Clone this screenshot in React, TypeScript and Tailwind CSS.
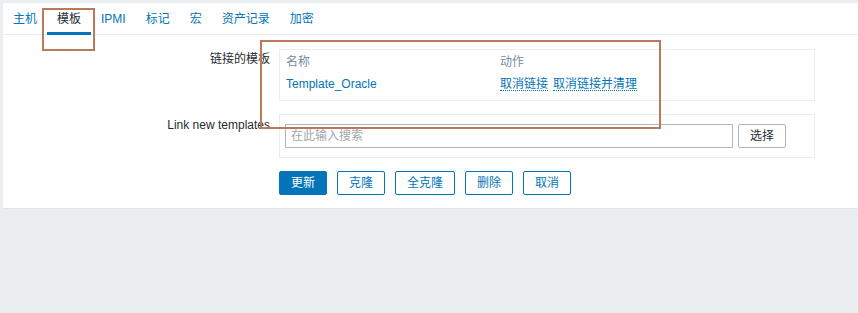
import { useState } from "react";

const tabs = ["主机", "模板", "IPMI", "标记", "宏", "资产记录", "加密"];
const actions = ["更新", "克隆", "全克隆", "删除", "取消"];

export default function App() {
  const [active, setActive] = useState(1);

  return (
    <div
      className="relative min-h-screen bg-[#ebeef0] pl-[3px] pt-[3px] text-[12px] leading-[14px] text-[#1f2c33]"
      style={{ fontFamily: '"Liberation Sans", Arial, "Noto Sans CJK SC", sans-serif' }}
    >
      <div className="border-b border-[#dfe4e7] bg-white">
        <ul className="flex h-[32px] border-b border-[#ebeef0]">
          {tabs.map((t, i) => (
            <li
              key={t}
              onClick={() => setActive(i)}
              className={
                "relative flex cursor-pointer items-center px-[10px] " +
                (i === active ? "text-[#1f2c33]" : "text-[#0275b8]")
              }
            >
              {t}
              {i === active && (
                <span className="absolute bottom-[-1px] left-0 right-0 h-[3px] bg-[#0275b8]" />
              )}
            </li>
          ))}
        </ul>

        <div className="flex flex-col gap-[13px] pb-[13px] pt-[14px]">
          <div className="flex">
            <div className="w-[267px] pt-[3px] text-right">链接的模板</div>
            <div className="ml-[9px] h-[52px] w-[536px] border border-[#ebeef0] px-[6px] pt-[5px]">
              <div className="flex h-[14px] text-[#768d99]">
                <span className="w-[214px]">名称</span>
                <span>动作</span>
              </div>
              <div className="mt-[8px] flex h-[14px]">
                <span className="w-[214px] text-[#0275b8]">Template_Oracle</span>
                <span className="flex gap-[5px] text-[#0275b8]">
                  <a className="cursor-pointer border-b border-dotted border-[#0275b8]">取消链接</a>
                  <a className="cursor-pointer border-b border-dotted border-[#0275b8]">取消链接并清理</a>
                </span>
              </div>
            </div>
          </div>

          <div className="flex">
            <div className="w-[267px] pt-[4px] text-right">Link new templates</div>
            <div className="ml-[9px] flex h-[44px] w-[536px] items-center gap-[5px] border border-[#ebeef0] px-[5px]">
              <input
                placeholder="在此输入搜索"
                className="h-[24px] w-[448px] border border-[#acbbc2] px-[5px] text-[12px] outline-none placeholder:text-[#a0a8ad]"
              />
              <button className="h-[24px] rounded-[2px] border border-[#acbbc2] bg-white px-[11px] text-[#1f2c33]">
                选择
              </button>
            </div>
          </div>

          <div className="ml-[276px] flex h-[24px] gap-[10px]">
            {actions.map((a, i) => (
              <button
                key={a}
                className={
                  "h-[24px] rounded-[2px] border border-[#0275b8] px-[11px] " +
                  (i === 0 ? "bg-[#0275b8] text-white" : "bg-white text-[#0275b8]")
                }
              >
                {a}
              </button>
            ))}
          </div>
        </div>
      </div>

      <div className="pointer-events-none absolute left-[42px] top-[8px] h-[43px] w-[53px] border-2 border-[#b77a5b]" />
      <div className="pointer-events-none absolute left-[260px] top-[40px] h-[89px] w-[401px] border-2 border-[#b77a5b]" />
    </div>
  );
}
